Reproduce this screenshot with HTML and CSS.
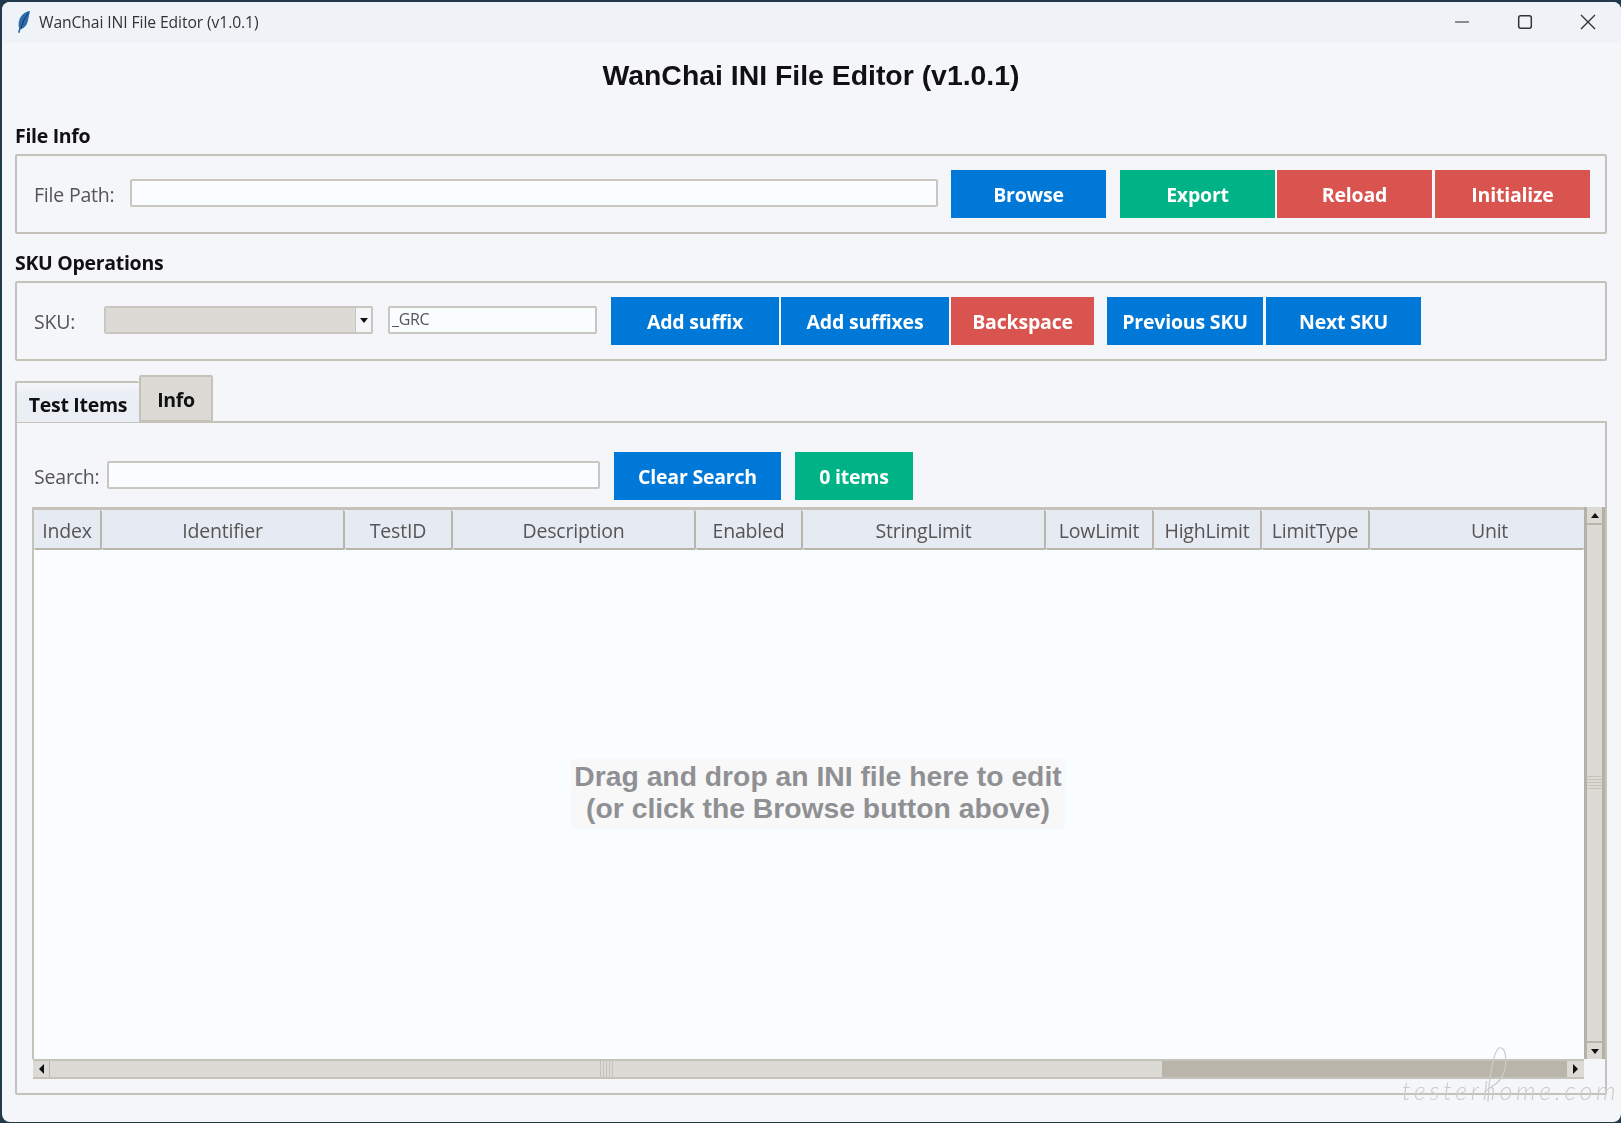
FILE: index.html
```html
<!DOCTYPE html>
<html lang="en">
<head>
<meta charset="utf-8">
<title>WanChai INI File Editor (v1.0.1)</title>
<link rel="stylesheet" href="styles.css">
</head>
<body>
<div class="win">
  <header class="titlebar">
    <svg class="feather" width="16" height="24" viewBox="0 0 16 24"><path d="M14 1C9 1.500 4 5.500 2.800 12c-.4 2.500-.2 4.500.3 6L2 22.500l1.500.5 1.300-4c4-1 6.200-4 7.200-8.500.7-3.500 1.500-7 2-9.500z" fill="#2a6cae"/><path d="M12.500 3C9 7 6.500 12 5 19" stroke="#14385c" stroke-width="1" fill="none"/></svg>
    <span class="titlebar-text">WanChai INI File Editor (v1.0.1)</span>
    <div class="winctl">
      <svg width="16" height="16" viewBox="0 0 16 16"><path d="M1 8h14" stroke="#555" stroke-width="1.300"/></svg>
      <svg width="16" height="16" viewBox="0 0 16 16"><rect x="1.700" y="1.700" width="12.600" height="12.600" rx="2" fill="none" stroke="#333" stroke-width="1.500"/></svg>
      <svg width="16" height="16" viewBox="0 0 16 16"><path d="M1 1l14 14M15 1L1 15" stroke="#333" stroke-width="1.400"/></svg>
    </div>
  </header>
  <main class="app">
    <h1 class="apptitle">WanChai INI File Editor (v1.0.1)</h1>
    <h2 class="seclabel first">File Info</h2>
    <section class="frame">
      <span class="lbl lbl-path">File Path:</span>
      <div class="entry entry-path"></div>
      <button class="btn blue w155 gap-m">Browse</button>
      <button class="btn green w155 gap-l">Export</button>
      <button class="btn red w155 gap-s">Reload</button>
      <button class="btn red w155 gap-t">Initialize</button>
    </section>
    <h2 class="seclabel">SKU Operations</h2>
    <section class="frame">
      <span class="lbl lbl-sku">SKU:</span>
      <div class="combo"><div class="combo-field"></div><div class="combo-btn"><i class="tri tri-d"></i></div></div>
      <div class="entry entry-suffix">_GRC</div>
      <button class="btn blue w168 gap-l">Add suffix</button>
      <button class="btn blue w168 gap-s">Add suffixes</button>
      <button class="btn red w143 gap-s">Backspace</button>
      <button class="btn blue w156 gap-m">Previous SKU</button>
      <button class="btn blue w155 gap-t">Next SKU</button>
    </section>
    <nav class="tabs">
      <div class="tab tab-on">Test Items</div>
      <div class="tab tab-off">Info</div>
    </nav>
    <section class="pane">
      <div class="searchrow">
        <span class="lbl lbl-search">Search:</span>
        <div class="entry entry-search"></div>
        <button class="btn blue w167 gap-l">Clear Search</button>
        <button class="btn green w118 gap-l">0 items</button>
      </div>
      <div class="treewrap">
        <div class="tree">
          <div class="thead">
            <div class="th">Index</div>
            <div class="th">Identifier</div>
            <div class="th">TestID</div>
            <div class="th">Description</div>
            <div class="th">Enabled</div>
            <div class="th">StringLimit</div>
            <div class="th">LowLimit</div>
            <div class="th">HighLimit</div>
            <div class="th">LimitType</div>
            <div class="th th-unit">Unit</div>
          </div>
          <div class="tbody">
            <div class="dropmsg">Drag and drop an INI file here to edit<br>(or click the Browse button above)</div>
          </div>
        </div>
        <div class="vbar">
          <div class="sb-btn sb-top"><i class="tri tri-u"></i></div>
          <div class="vthumb"><div class="vgrip"></div></div>
          <div class="sb-btn sb-bottom"><i class="tri tri-d"></i></div>
        </div>
        <div class="hbar">
          <div class="sb-btn sb-left"><i class="tri tri-l"></i></div>
          <div class="hthumb"><div class="hgrip"></div></div>
          <div class="htrough"></div>
          <div class="sb-btn sb-right"><i class="tri tri-r"></i></div>
        </div>
      </div>
    </section>
  </main>
</div>
<div class="watermark"><svg class="wm-loop" width="24" height="56" viewBox="0 0 24 56"><path d="M2 55C3 32 7 5 13 1c6-2 8 9 6 21-2 9-8 15-14 18" fill="none" stroke="#cbcbcb" stroke-width="1.200"/></svg><span class="wm-text">testerhome.com</span></div>
</body>
</html>
```
FILE: styles.css
```css
* { box-sizing: border-box; }
html, body { margin: 0; height: 100%; }
body {
  position: relative;
  width: 1621px;
  height: 1123px;
  overflow: hidden;
  background: #22394a;
  font-family: "Open Sans", "Noto Sans", sans-serif;
}
.win {
  width: 1619px;
  height: 1120px;
  margin: 2px 0 0 2px;
  background: #f5f6fa;
  border-radius: 8px;
  overflow: hidden;
  display: flex;
  flex-direction: column;
  filter: blur(0.55px);
}
.titlebar {
  height: 41px;
  flex: none;
  background: #eff3f8;
  display: flex;
  align-items: center;
  padding-left: 14px;
}
.feather { flex: none; margin-top: -2px; }
.titlebar-text {
  margin: 0 0 2px 7px;
  font-size: 15.700px;
  color: #333;
  letter-spacing: -0.1px;
}
.winctl {
  margin: 0 0 2px auto;
  padding-right: 25px;
  display: flex;
  gap: 47px;
}
.app { flex: 1; padding: 0 14px 0 13px; display: flex; flex-direction: column; }
.apptitle {
  margin: 0;
  padding-top: 14px;
  height: 74px;
  text-align: center;
  font: bold 28.400px/36px "Liberation Sans", Arial, sans-serif;
  color: #111;
}
.seclabel {
  margin: 0;
  padding: 18px 0 7px;
  height: 47px;
  font-size: 19.500px;
  line-height: 22px;
  font-weight: 700;
  color: #111;
  letter-spacing: -0.3px;
}
.seclabel.first { padding: 8px 0 7px; height: 37px; }
.frame {
  height: 80px;
  border: 2px solid #c5c2ba;
  border-radius: 2px;
  padding: 0 14px 0 17px;
  display: flex;
  align-items: center;
}
.lbl { color: #555; font-size: 19.500px; letter-spacing: -0.2px; flex: none; }
.lbl-path { width: 96px; }
.lbl-sku { width: 70px; }
.lbl-search { width: 73px; }
.entry {
  flex: none;
  height: 28px;
  margin-bottom: 2px;
  background: #fafdff;
  border: 2px solid #c9c6bf;
  border-radius: 2px;
  color: #555;
  font-size: 16px;
  line-height: 23px;
  padding-left: 2px;
  letter-spacing: -0.3px;
}
.entry-path { width: 808px; }
.entry-suffix { width: 209px; margin-left: 15px; }
.entry-search { width: 493px; }
.combo { flex: none; width: 269px; height: 28px; margin-bottom: 2px; display: flex; border: 2px solid #c9c6bf; border-radius: 2px; }
.combo-field { flex: 1; background: #dcdad5; }
.combo-btn { width: 16px; background: #f5f6fa; border-left: 1px solid #c9c6bf; display: flex; align-items: center; justify-content: center; }
.tri { display: block; width: 0; height: 0; border-style: solid; border-color: transparent; }
.tri-d { border-width: 5px 4px 0; border-top-color: #111; }
.tri-u { border-width: 0 4px 5px; border-bottom-color: #111; }
.tri-l { border-width: 5px 5px 5px 0; border-right-color: #111; }
.tri-r { border-width: 5px 0 5px 5px; border-left-color: #111; }
.btn {
  flex: none;
  height: 48px;
  border: 0;
  padding: 0;
  color: #fff;
  font: 700 19.500px "Open Sans", "Noto Sans", sans-serif;
  letter-spacing: -0.2px;
}
.blue { background: #0078d7; }
.green { background: #00b386; }
.red { background: #d9534f; }
.w118 { width: 118px; }
.w143 { width: 143px; }
.w155 { width: 155px; }
.w156 { width: 156px; }
.w167 { width: 167px; }
.w168 { width: 168px; }
.gap-l { margin-left: 14px; }
.gap-m { margin-left: 13px; }
.gap-s { margin-left: 2px; }
.gap-t { margin-left: 3px; }
.tabs { height: 61px; flex: none; display: flex; align-items: flex-end; position: relative; z-index: 1; }
.tab { font-weight: 700; font-size: 19.500px; letter-spacing: -0.3px; color: #111; text-align: center; border: 2px solid #c5c2ba; border-radius: 2px 2px 0 0; }
.tab-on { width: 124px; height: 41px; background: linear-gradient(#f5f6fa 0, #eaeef5 30%); border-bottom: 0; border-right: 0; line-height: 44px; }
.tab-off { width: 74px; height: 47px; background: #dcdad5; line-height: 45px; }
.pane {
  flex: none;
  height: 674px;
  margin-top: -1px;
  border: 2px solid #c5c2ba;
  border-radius: 0 0 2px 2px;
  padding: 29px 0 0 15px;
}
.searchrow { display: flex; align-items: center; padding-left: 2px; height: 48px; }
.treewrap {
  margin-top: 7px;
  display: grid;
  grid-template-columns: 1552px 21px;
  grid-template-rows: 552px 20px;
}
.tree { border: solid #c5c2ba; border-width: 3px 0 0 2px; display: flex; flex-direction: column; background: #fafdff; }
.thead { display: grid; grid-template-columns: 68px 243px 108px 243px 107px 243px 108px 108px 108px 1fr; height: 40px; flex: none; }
.th {
  background: #e6eaf2;
  border: solid #b9b5ab;
  border-width: 0 2px 2px 0;
  border-radius: 2px;
  color: #555;
  font-size: 19.500px;
  line-height: 42px;
  text-align: center;
  letter-spacing: -0.2px;
  overflow: hidden;
  white-space: nowrap;
}
.th-unit { border-right: 0; padding-left: 25px; }
.tbody { flex: 1; position: relative; }
.dropmsg {
  position: absolute;
  left: 537px;
  top: 209px;
  width: 494px;
  height: 70px;
  background: #f8f8f8;
  color: #8f9094;
  font: bold 28.300px/32px "Liberation Sans", Arial, sans-serif;
  text-align: center;
  padding-top: 1px;
  white-space: nowrap;
}
.vbar {
  display: flex;
  flex-direction: column;
  background: #dcdad5;
  border: solid #b5b1a6;
  border-width: 0 3px;
  height: 552px;
}
.sb-btn { flex: none; background: #dcdad5; display: flex; align-items: center; justify-content: center; }
.sb-top, .sb-bottom { height: 18px; }
.sb-top { border-bottom: 2px solid #b9b5ab; }
.sb-bottom { border-top: 2px solid #b9b5ab; margin-top: auto; }
.vthumb { flex: 1; display: flex; align-items: center; justify-content: center; }
.vgrip { width: 100%; height: 14px; background: repeating-linear-gradient(#c5c2ba 0 1px, #dcdad5 1px 3px); }
.hbar { display: flex; background: #bab5ab; border: solid #c5c2ba; border-width: 2px 0 2px 0; height: 20px; margin-left: 1px; }
.sb-left, .sb-right { width: 17px; }
.sb-left { border-right: 1px solid #b9b5ab; }
.hthumb { width: 1112px; background: #dcdad5; display: flex; align-items: center; justify-content: center; }
.hgrip { width: 13px; height: 100%; background: repeating-linear-gradient(90deg, #c5c2ba 0 1px, #dcdad5 1px 3px); }
.htrough { flex: 1; }
.watermark {
  position: absolute;
  left: 1400px;
  top: 1047px;
  width: 221px;
  height: 64px;
  pointer-events: none;
}
.wm-loop { position: absolute; left: 86px; top: 0; }
.wm-text {
  position: absolute;
  left: 2px;
  top: 28px;
  font: italic 300 25px/30px "Lato", "Open Sans", sans-serif;
  letter-spacing: 3.800px;
  color: #cbcbcb;
  white-space: nowrap;
}
```
